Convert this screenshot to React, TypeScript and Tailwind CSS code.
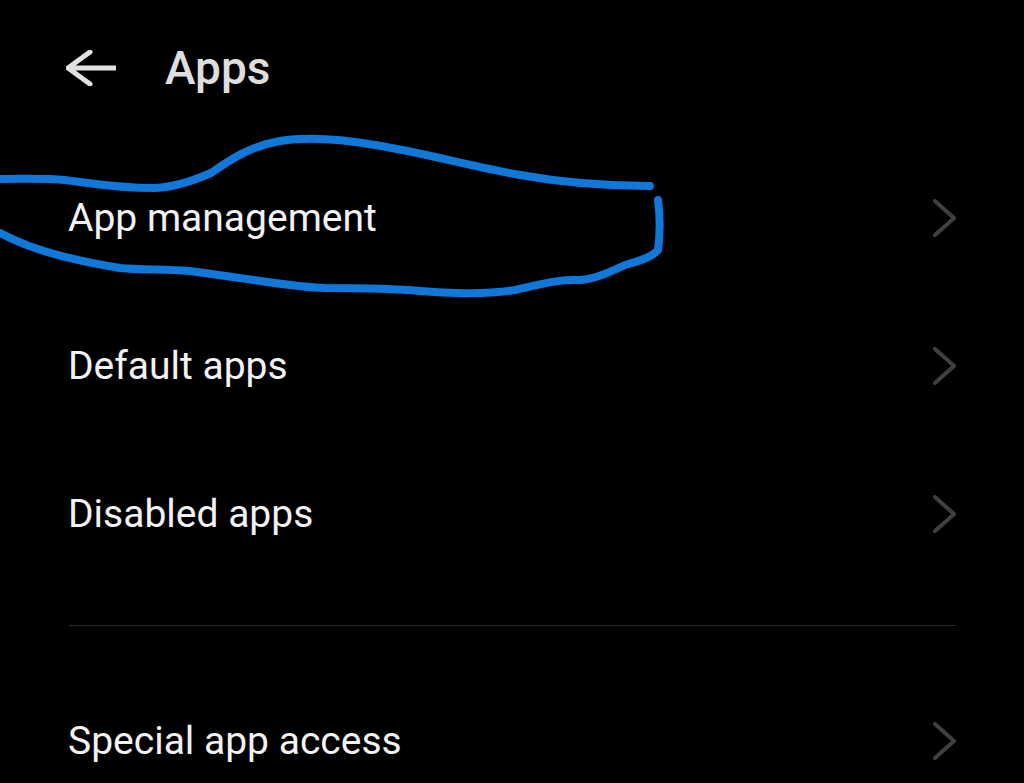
import { ReactNode } from "react";

function Chevron() {
    return (
        <svg width="24" height="38" viewBox="0 0 24 38" fill="none" className="shrink-0">
            <path d="M2 2L21 19L2 36" stroke="#3f3f3f" strokeWidth="4" strokeLinecap="round" strokeLinejoin="round" />
        </svg>
    );
}

function Row({ children }: { children: ReactNode }) {
    return (
        <div className="h-[148px] shrink-0 flex items-center justify-between pl-[68px] pr-[67px] text-[39px] text-[#f2f2f2]">
            <span>{children}</span>
            <Chevron />
        </div>
    );
}

export default function App() {
    return (
        <div className="relative w-[1024px] h-[783px] overflow-hidden bg-black font-['Roboto',sans-serif]">
            {/* header */}
            <div className="h-[136px] mb-[8px] flex items-center pl-[66px]">
                <svg width="50" height="36" viewBox="0 0 50 36" fill="none">
                    <path d="M49 18H3M24 2L2 18L24 34" stroke="#e2e2e2" strokeWidth="5" strokeLinecap="round" strokeLinejoin="round" />
                </svg>
                <span className="ml-[49px] text-[46px] font-medium text-[#dedede]">Apps</span>
            </div>

            <Row>App management</Row>
            <Row>Default apps</Row>
            <Row>Disabled apps</Row>

            <div className="mt-[37px] mb-[41px] ml-[69px] mr-[68px] h-px bg-[#2a2a2a]" />

            <Row>Special app access</Row>

            {/* hand drawn marker around the first row */}
            <svg width="1024" height="783" viewBox="0 0 1024 783" fill="none" className="absolute inset-0 pointer-events-none">
                <path
                    d="M0 179C25 179 45 178 65 180C90 183 115 188 155 188C175 187 195 180 211 173C230 160 250 146 280 141C305 137 340 139 375 145C420 152 470 166 520 175C565 183 610 186 650 186"
                    stroke="#0f78d8"
                    strokeWidth="8"
                    strokeLinecap="round"
                />
                <path
                    d="M658 200C660 215 660 235 658 250C652 257 640 261 625 265C610 272 595 279 580 280C555 279 540 285 515 290C490 294 450 294 420 291C390 288 350 288 325 288C290 287 245 278 190 271C165 269 140 270 120 268C90 263 60 257 35 248C20 243 10 238 0 233"
                    stroke="#0f78d8"
                    strokeWidth="8"
                    strokeLinecap="round"
                />
            </svg>
        </div>
    );
}
